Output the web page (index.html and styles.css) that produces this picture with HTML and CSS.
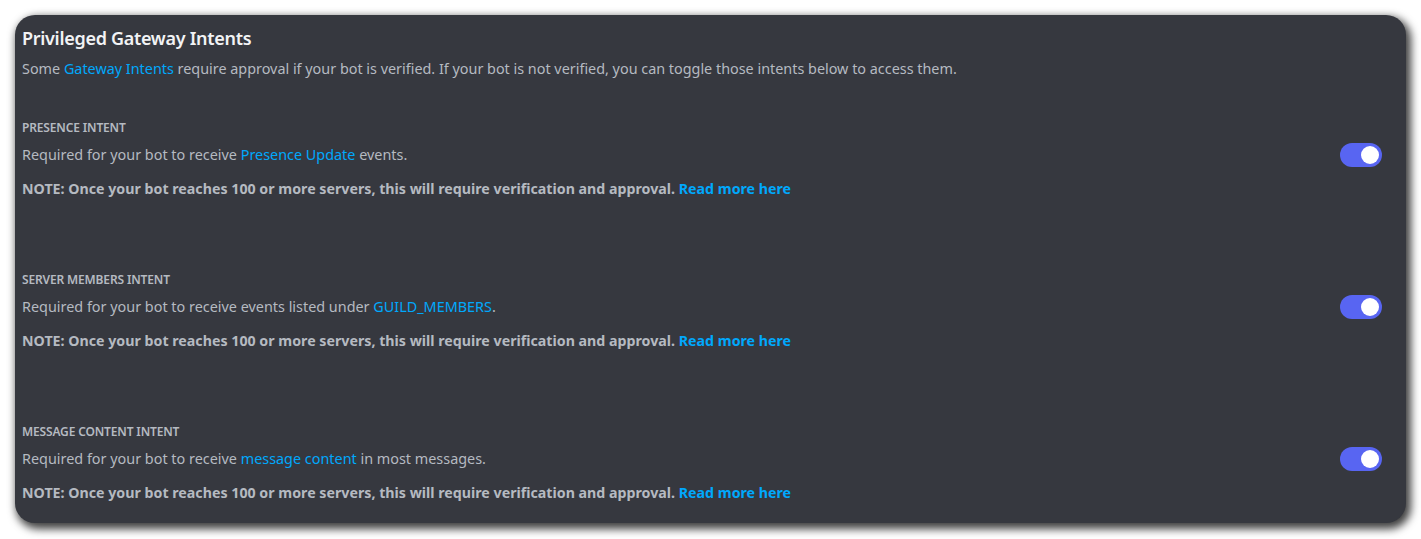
FILE: index.html
```html
<!DOCTYPE html>
<html lang="en">
<head>
<meta charset="utf-8">
<title>Privileged Gateway Intents</title>
<link rel="stylesheet" href="styles.css">
</head>
<body>
<section class="card">
  <h2 class="title">Privileged Gateway Intents</h2>
  <p class="desc">Some <a class="link" href="#">Gateway Intents</a> require approval if your bot is verified. If your bot is not verified, you can toggle those intents below to access them.</p>

  <div class="intent">
    <h3 class="intent-title">PRESENCE INTENT</h3>
    <div class="intent-row">
      <p class="intent-text">Required for your bot to receive <a class="link" href="#">Presence Update</a> events.</p>
      <span class="toggle"><span class="knob"></span></span>
    </div>
    <p class="note">NOTE: Once your bot reaches 100 or more servers, this will require verification and approval. <a class="link" href="#">Read more here</a></p>
  </div>

  <div class="intent">
    <h3 class="intent-title">SERVER MEMBERS INTENT</h3>
    <div class="intent-row">
      <p class="intent-text">Required for your bot to receive events listed under <a class="link" href="#">GUILD_MEMBERS</a>.</p>
      <span class="toggle"><span class="knob"></span></span>
    </div>
    <p class="note">NOTE: Once your bot reaches 100 or more servers, this will require verification and approval. <a class="link" href="#">Read more here</a></p>
  </div>

  <div class="intent">
    <h3 class="intent-title">MESSAGE CONTENT INTENT</h3>
    <div class="intent-row">
      <p class="intent-text">Required for your bot to receive <a class="link" href="#">message content</a> in most messages.</p>
      <span class="toggle"><span class="knob"></span></span>
    </div>
    <p class="note">NOTE: Once your bot reaches 100 or more servers, this will require verification and approval. <a class="link" href="#">Read more here</a></p>
  </div>
</section>
</body>
</html>
```
FILE: styles.css
```css
* { box-sizing: border-box; }
html, body { margin: 0; padding: 0; background: #ffffff; }
body {
  font-family: "Noto Sans", "Open Sans", sans-serif;
  padding: 15px 15px 16px 15px;
}
.card {
  width: 1391px;
  height: 508px;
  background: #36383f;
  border-radius: 20px;
  padding: 11px 24px 0 7px;
  box-shadow: 3px 4px 9px 2px rgba(0,0,0,0.75);
  color: #b5bac1;
}
.title {
  margin: 0;
  font-size: 18px;
  line-height: 24px;
  font-weight: 600;
  letter-spacing: -0.3px;
  color: #f2f3f5;
}
.desc {
  margin: 9px 0 0 0;
  font-size: 14.38px;
  line-height: 20px;
}
.link { color: #00a8fc; text-decoration: none; }
.intent { margin-top: 41px; }
.intent + .intent { margin-top: 73px; }
.intent-title {
  margin: 0;
  font-size: 12px;
  line-height: 16px;
  font-weight: 600;
  letter-spacing: -0.15px;
  color: #b5bac1;
}
.intent-row {
  margin-top: 9px;
  height: 20px;
  display: flex;
  align-items: center;
  justify-content: space-between;
}
.intent-text {
  margin: 0;
  font-size: 14.4px;
  line-height: 20px;
}
.toggle {
  flex: none;
  width: 42px;
  height: 24px;
  border-radius: 12px;
  background: #5865f2;
  display: flex;
  align-items: center;
  justify-content: flex-end;
  padding-right: 3px;
}
.knob {
  width: 18px;
  height: 18px;
  border-radius: 50%;
  background: #ffffff;
}
.note {
  margin: 14px 0 0 0;
  font-size: 14.22px;
  line-height: 20px;
  font-weight: 700;
  color: #b5bac1;
}
.note .link { font-weight: 700; }
```
